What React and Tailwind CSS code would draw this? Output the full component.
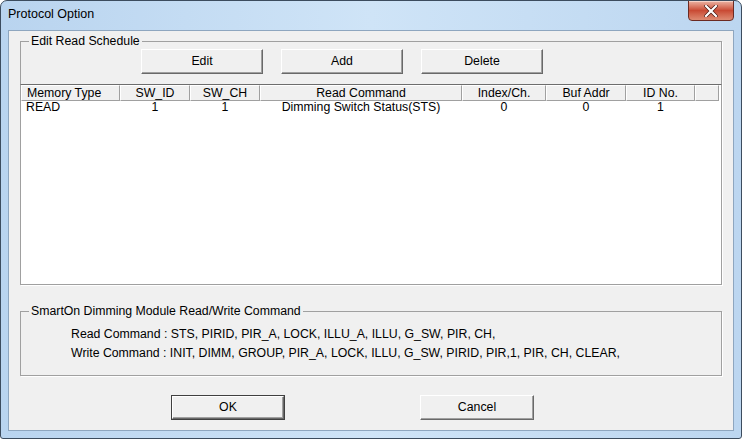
import React from "react";

const cols = [
  { label: "Memory Type", w: 99, align: "text-left pl-[5px]" },
  { label: "SW_ID", w: 70, align: "text-center" },
  { label: "SW_CH", w: 70, align: "text-center" },
  { label: "Read Command", w: 202, align: "text-center" },
  { label: "Index/Ch.", w: 84, align: "text-center" },
  { label: "Buf Addr", w: 80, align: "text-center" },
  { label: "ID No.", w: 69, align: "text-center" },
];

const rows = [["READ", "1", "1", "Dimming Switch Status(STS)", "0", "0", "1"]];

const Btn = ({ children, w = "w-[122px]", isDefault = false }) => (
  <div className={`${w} h-[25px] ${isDefault ? "border border-[#404040]" : ""}`}>
    <div className="w-full h-full bg-[#f0f0f0] border-t border-l border-t-white border-l-white border-r border-b border-r-[#696969] border-b-[#696969] shadow-[inset_-1px_-1px_0_#a0a0a0] flex items-center justify-center text-black">
      {children}
    </div>
  </div>
);

const GroupLabel = ({ children }) => (
  <div className="absolute left-[8px] -top-[8px] px-[2px] bg-[#f0f0f0] leading-[15px] text-black">{children}</div>
);

export default function App() {
  return (
    <div
      className="w-[742px] h-[439px] flex flex-col border border-[#3c4c5e] rounded-t-[7px] rounded-b-[3px] overflow-hidden bg-gradient-to-r from-[#b9d4ef] via-[#cfe4f7] to-[#bcd6f0] text-[12.3px]"
      style={{ fontFamily: '"Liberation Sans", Arial, sans-serif' }}
    >
      {/* title bar */}
      <div className="relative h-[29px] flex items-center pl-[7px] pb-[2px] text-[12.5px] text-black">
        <span>Protocol Option</span>
        <div className="absolute right-[7px] -top-px w-[46px] h-[21px] rounded-b-[4px] border border-[#6b2a22] bg-gradient-to-b from-[#eab3a4] via-[#c94a34] to-[#dd8a72] shadow-[inset_0_1px_0_#f6d2c8] flex items-center justify-center">
          <svg width="14" height="12" viewBox="0 0 14 12">
            <path d="M2 1 L12 11 M12 1 L2 11" stroke="#4a1a14" strokeWidth="3.6" strokeLinecap="square" />
            <path d="M2 1 L12 11 M12 1 L2 11" stroke="#ffffff" strokeWidth="2.2" strokeLinecap="square" />
          </svg>
        </div>
      </div>

      {/* client area */}
      <div className="flex-1 mx-[7px] mb-[7px] bg-[#f0f0f0] border border-[#8ea6bf] flex flex-col px-[11px] pt-[10px]">
        {/* Edit Read Schedule group */}
        <div className="relative border border-[#a0a0a0] shadow-[1px_1px_0_#ffffff] flex flex-col pt-[7px]">
          <GroupLabel>Edit Read Schedule</GroupLabel>
          <div className="flex gap-[18px] pl-[120px]">
            <Btn>Edit</Btn>
            <Btn>Add</Btn>
            <Btn>Delete</Btn>
          </div>
          <div className="mt-[10px] -mx-px -mb-px h-[201px] bg-white border border-[#a0a0a0] border-t-[#6d6d6d] flex flex-col">
            <div className="flex h-[16px] bg-[#f0f0f0] leading-[15px]">
              {cols.map((c) => (
                <div
                  key={c.label}
                  className={`${c.align} shrink-0 border-t border-l border-white border-r border-r-[#a0a0a0] border-b border-b-[#a0a0a0]`}
                  style={{ width: c.w }}
                >
                  {c.label}
                </div>
              ))}
              <div className="w-[24px] shrink-0 border-t border-l border-white border-r border-r-[#a0a0a0] border-b border-b-[#a0a0a0]" />
              <div className="flex-1 bg-white" />
            </div>
            {rows.map((r, i) => (
              <div key={i} className="flex h-[13px] leading-[13px]">
                {r.map((v, j) => (
                  <div key={j} className={`${cols[j].align} shrink-0`} style={{ width: cols[j].w }}>
                    {v}
                  </div>
                ))}
              </div>
            ))}
          </div>
        </div>

        {/* command group */}
        <div className="relative mt-[26px] h-[65px] border border-[#a0a0a0] shadow-[1px_1px_0_#ffffff] pl-[50px] pt-[13px] leading-[19px] text-black">
          <GroupLabel>SmartOn Dimming Module Read/Write Command</GroupLabel>
          <div>Read Command : STS, PIRID, PIR_A, LOCK, ILLU_A, ILLU, G_SW, PIR, CH,</div>
          <div>Write Command : INIT, DIMM, GROUP, PIR_A, LOCK, ILLU, G_SW, PIRID, PIR,1, PIR, CH, CLEAR,</div>
        </div>

        {/* dialog buttons */}
        <div className="flex mt-[19px] pl-[151px] gap-[135px]">
          <Btn w="w-[114px]" isDefault>
            OK
          </Btn>
          <Btn w="w-[114px]">Cancel</Btn>
        </div>
      </div>
    </div>
  );
}
